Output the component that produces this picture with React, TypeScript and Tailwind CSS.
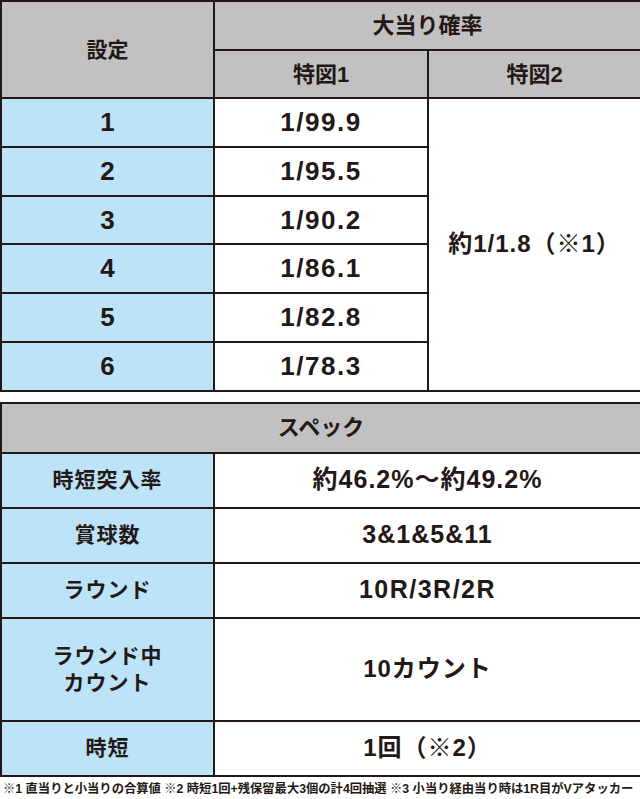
import React from "react";

const font = { fontFamily: '"Liberation Sans", "Noto Sans CJK JP", sans-serif' };

export default function App() {
  const rates = ["1/99.9", "1/95.5", "1/90.2", "1/86.1", "1/82.8", "1/78.3"];
  const td = "border-2 border-[#231815] text-center align-middle font-bold";
  return (
    <div className="w-[640px] h-[799px] bg-white text-[#231815] overflow-hidden" style={font}>
      <table className="w-[640px] table-fixed border-collapse">
        <colgroup>
          <col className="w-[213px]" />
          <col className="w-[214px]" />
          <col className="w-[213px]" />
        </colgroup>
        <tbody>
          <tr className="h-[48.7px]">
            <td rowSpan={2} className={`${td} bg-[#c1c1c1] text-[21px]`}>設定</td>
            <td colSpan={2} className={`${td} bg-[#c1c1c1] text-[22px]`}>大当り確率</td>
          </tr>
          <tr className="h-[48.7px]">
            <td className={`${td} bg-[#c1c1c1] text-[22px]`}>特図1</td>
            <td className={`${td} bg-[#c1c1c1] text-[22px]`}>特図2</td>
          </tr>
          {rates.map((r, i) => (
            <tr key={i} className="h-[48.7px]">
              <td className={`${td} bg-[#bde3f8] text-[26px]`}>{i + 1}</td>
              <td className={`${td} bg-white text-[26px] tracking-[1.5px]`}>{r}</td>
              {i === 0 && (
                <td rowSpan={6} className={`${td} bg-white text-[24px] tracking-[1px]`}>
                  約1/1.8（※1）
                </td>
              )}
            </tr>
          ))}
        </tbody>
      </table>
      <table className="w-[640px] table-fixed border-collapse mt-[10px]">
        <colgroup>
          <col className="w-[213px]" />
          <col className="w-[427px]" />
        </colgroup>
        <tbody>
          <tr className="h-[50px]">
            <td colSpan={2} className={`${td} bg-[#c1c1c1] text-[22px]`}>スペック</td>
          </tr>
          <tr className="h-[55px]">
            <td className={`${td} bg-[#bde3f8] text-[21px] tracking-[1px]`}>時短突入率</td>
            <td className={`${td} bg-white text-[25px] tracking-[1px]`}>約46.2%～約49.2%</td>
          </tr>
          <tr className="h-[55px]">
            <td className={`${td} bg-[#bde3f8] text-[21px] tracking-[1px]`}>賞球数</td>
            <td className={`${td} bg-white text-[25px] tracking-[1px]`}>3&amp;1&amp;5&amp;11</td>
          </tr>
          <tr className="h-[55px]">
            <td className={`${td} bg-[#bde3f8] text-[21px] tracking-[1px]`}>ラウンド</td>
            <td className={`${td} bg-white text-[25px] tracking-[1.5px]`}>10R/3R/2R</td>
          </tr>
          <tr className="h-[103px]">
            <td className={`${td} bg-[#bde3f8] text-[21px] tracking-[1px] leading-[27px]`}>
              ラウンド中
              <br />
              カウント
            </td>
            <td className={`${td} bg-white text-[24px] tracking-[1px]`}>10カウント</td>
          </tr>
          <tr className="h-[55px]">
            <td className={`${td} bg-[#bde3f8] text-[21px] tracking-[1px]`}>時短</td>
            <td className={`${td} bg-white text-[24px] tracking-[1px]`}>1回（※2）</td>
          </tr>
        </tbody>
      </table>
      <div className="mt-[4px] pl-[3px] text-[12.3px] leading-[16px] font-bold whitespace-nowrap">
        ※1 直当りと小当りの合算値 ※2 時短1回+残保留最大3個の計4回抽選 ※3 小当り経由当り時は1R目がVアタッカー
      </div>
    </div>
  );
}
